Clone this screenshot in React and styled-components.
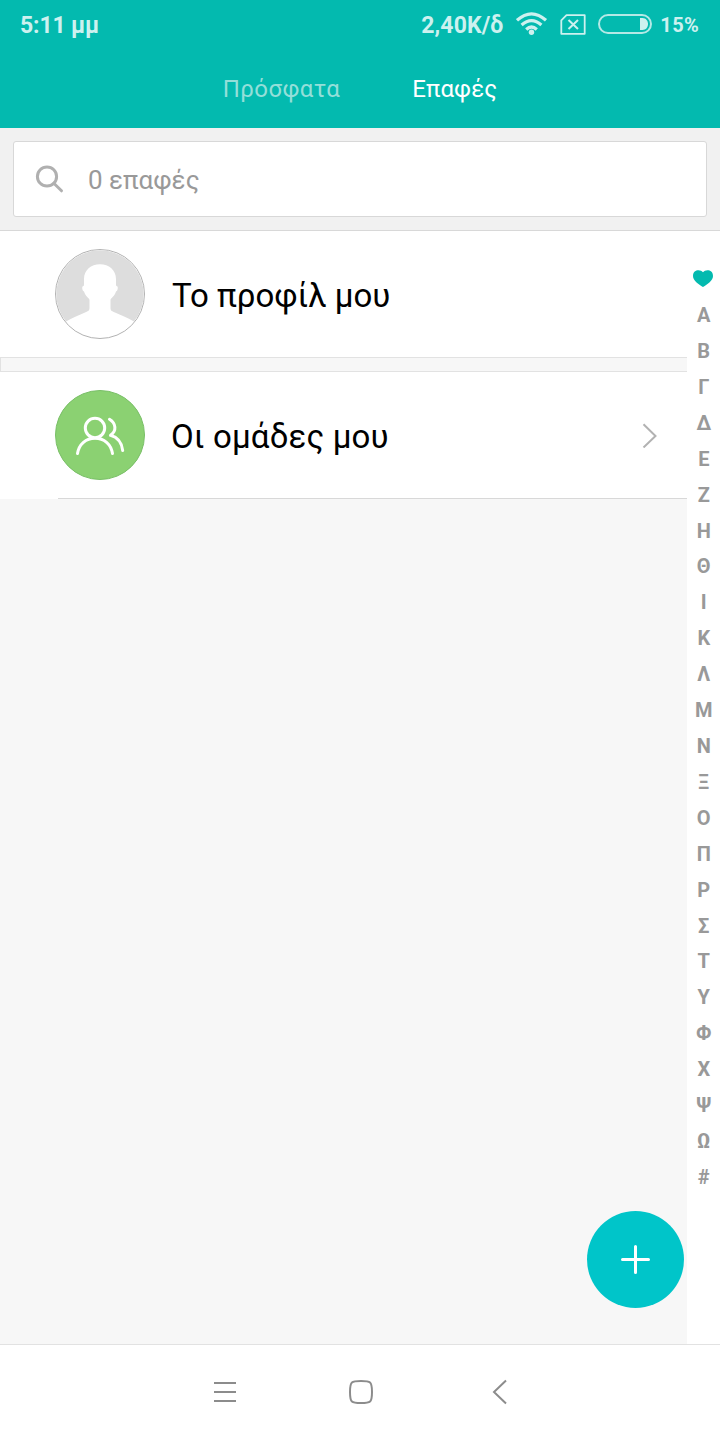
import React from "react";
import styled, { createGlobalStyle } from "styled-components";

const GlobalStyle = createGlobalStyle`
  * {
    box-sizing: border-box;
  }
  body {
    margin: 0;
    background: #f7f7f7;
    font-family: Roboto, "Noto Sans", sans-serif;
  }
  svg {
    display: block;
    flex: none;
  }
  button {
    padding: 0;
    border: 0;
    background: none;
    font: inherit;
    color: inherit;
  }
`;

const Screen = styled.div`
  position: relative;
  display: flex;
  flex-direction: column;
  width: 720px;
  height: 1440px;
  overflow: hidden;
`;

const Header = styled.header`
  height: 128px;
  background: #03baaf;
`;

const StatusBar = styled.div`
  display: flex;
  align-items: flex-start;
  height: 50px;
  padding: 0 21px 0 20px;
  color: #cdf1ef;
  font-weight: 700;
`;

const StatusText = styled.span`
  margin-left: ${({ $gap }) => $gap || 0}px;
  padding-top: ${({ $top }) => $top || 0}px;
  font-size: ${({ $size }) => $size || 23}px;
  line-height: 50px;
  white-space: nowrap;
  letter-spacing: ${({ $spacing }) => $spacing || 0}px;
`;

const StatusIcons = styled.div`
  display: flex;
  align-items: flex-start;
  margin-left: auto;
`;

const Glyph = styled.svg`
  margin-left: ${({ $gap }) => $gap}px;
  margin-top: ${({ $top }) => $top}px;
`;

const Tabs = styled.nav`
  display: flex;
  justify-content: center;
  gap: 72px;
  height: 78px;
`;

const Tab = styled.button`
  height: 79px;
  line-height: 79px;
  font-size: 24px;
  letter-spacing: ${({ $spacing }) => $spacing || 0}px;
  color: ${({ $active }) => ($active ? "#ffffff" : "#93dfd9")};
`;

const SearchArea = styled.div`
  height: 103px;
  padding: 13px;
  background: #f1f1f1;
  border-bottom: 1px solid #d8d8d8;
`;

const SearchBox = styled.div`
  display: flex;
  align-items: center;
  height: 76px;
  padding-left: 21px;
  background: #ffffff;
  border: 1px solid #d8d8d8;
  border-radius: 3px;
`;

const SearchText = styled.span`
  margin: 2px 0 0 23px;
  font-size: 26px;
  color: #999999;
`;

const Body = styled.main`
  display: flex;
  flex: 1;
  min-height: 0;
`;

const List = styled.div`
  flex: 1;
  background: #f7f7f7;
`;

const Row = styled.div`
  display: flex;
  align-items: center;
  height: 126px;
  padding: 0 29px 0 55px;
  background: #ffffff;
`;

const Name = styled.span`
  flex: 1;
  margin: 2px 0 0 ${({ $gap }) => $gap}px;
  font-size: 33px;
  letter-spacing: ${({ $spacing }) => $spacing || 0}px;
  color: #000000;
`;

const Divider = styled.div`
  height: 15px;
  border: 1px solid #e2e2e2;
  border-right: 0;
  background: #f7f7f7;
`;

const Underline = styled.div`
  height: 1px;
  border-left: 58px solid #ffffff;
  background: #d8d8d8;
`;

const Index = styled.div`
  display: flex;
  flex-direction: column;
  align-items: center;
  width: 33px;
  padding-top: 39px;
  background: #ffffff;
`;

const Favorites = styled.div`
  height: 27.1px;
  padding-right: 1px;
`;

const Letter = styled.span`
  height: 35.91px;
  padding-left: 0.5px;
  line-height: 36px;
  font-size: 20px;
  font-weight: 700;
  color: #999999;
`;

const NavBar = styled.footer`
  display: flex;
  justify-content: center;
  align-items: center;
  gap: 112px;
  height: 96px;
  padding: 0 0 2px 3px;
  border-top: 1px solid #e2e2e2;
  background: #ffffff;
`;

const AddButton = styled.button`
  position: absolute;
  right: 36px;
  bottom: 132px;
  display: flex;
  align-items: center;
  justify-content: center;
  width: 97px;
  height: 97px;
  border-radius: 50%;
  background: #00c5c9;
`;

const WifiIcon = () => (
  <Glyph $gap={13} $top={11} width="32" height="26" viewBox="0 0 32 26" fill="none" stroke="#cdf1ef" strokeWidth="3.2">
    <path d="M1 9.3Q15.5 -3.7 30 9.3" />
    <path d="M5.6 14Q15.5 5.2 25.4 14" />
    <path d="M10.2 18.5Q15.5 13.5 20.8 18.5" />
    <circle cx="15.5" cy="21.2" r="2.7" fill="#cdf1ef" stroke="none" />
  </Glyph>
);

const SimIcon = () => (
  <Glyph $gap={12} $top={14} width="26" height="22" viewBox="0 0 26 22" fill="none" stroke="#cdf1ef">
    <path d="M6.5 1.2H24.7V19.8H1.3V6.3Z" strokeWidth="1.8" strokeLinejoin="round" />
    <path d="M8.5 6L18 15M18 6L8.5 15" strokeWidth="2" />
  </Glyph>
);

const BatteryIcon = () => (
  <Glyph $gap={12} $top={14} width="54" height="20" viewBox="0 0 54 20">
    <rect x="1" y="1" width="52" height="18" rx="9" fill="none" stroke="#b4e9e6" strokeWidth="2" />
    <path d="M42 4H44.5C48 4 50 7 50 10S48 16 44.5 16H42Z" fill="#cdf1ef" />
  </Glyph>
);

const SearchIcon = () => (
  <svg width="30" height="30" viewBox="0 0 30 30" fill="none" stroke="#b0b0b0" strokeWidth="3">
    <circle cx="12" cy="12.5" r="9.6" />
    <path d="M18.8 19.3L26.5 26.8" strokeLinecap="round" />
  </svg>
);

const ProfileAvatar = () => (
  <svg width="90" height="90" viewBox="0 0 90 90">
    <circle cx="45" cy="45" r="44.5" fill="#ffffff" stroke="#a9a9a9" strokeWidth="0.9" />
    <path
      d="M11 72.5A43.7 43.7 0 1 1 79 72.5C72 68.500 66 66 60 63.500C56.500 62 55.500 61.500 55.500 59V51C55.500 49 59.500 48 61 42.500C63 42 63.500 37 61.500 37C60.800 37 61 34 61 30C61 21 54 15.200 45 15.200S29 21 29 30C29 34 29.200 37 28.500 37C26.500 37 27 42 29 42.500C30.500 48 34.500 49 34.500 51V59C34.500 61.500 33.500 62 30 63.500C24 66 18 68.500 11 72.500Z"
      fill="#dddddd"
    />
  </svg>
);

const GroupAvatar = () => (
  <svg width="90" height="90" viewBox="0 0 90 90" fill="none">
    <circle cx="45" cy="45" r="44.5" fill="#8bd172" stroke="#79bf67" />
    <g stroke="#ffffff" strokeWidth="3" strokeLinecap="round">
      <circle cx="40" cy="38" r="9.7" />
      <path d="M22.5 63.5C24 54 31 48.2 40 48.2S56 54 57.5 63.5" />
      <path d="M54.5 29.3C61 33.3 62 41 55.5 45.3C62.5 47.2 66.8 53 67.7 60.5" strokeLinejoin="round" />
    </g>
  </svg>
);

const ChevronIcon = () => (
  <svg width="16" height="26" viewBox="0 0 16 26" fill="none" stroke="#b2b2b2" strokeWidth="2">
    <path d="M1.5 2.3L13.5 14L1.5 25.5" />
  </svg>
);

const HeartIcon = () => (
  <svg width="20" height="17" viewBox="0 0 20 17">
    <path
      d="M10 2.2C7.7 -0.8 0 -0.9 0 6C0 10.5 5.5 14.5 10 17C14.5 14.5 20 10.5 20 6C20 -0.9 12.3 -0.8 10 2.2Z"
      fill="#03baaf"
    />
  </svg>
);

const MenuIcon = () => (
  <svg width="24" height="26" viewBox="0 0 24 26" stroke="#8c8c8c" strokeWidth="2">
    <path d="M1 4H23M1 13H23M1 22H23" />
  </svg>
);

const HomeIcon = () => (
  <svg width="26" height="26" viewBox="0 0 26 26" fill="none" stroke="#8c8c8c" strokeWidth="2">
    <path d="M12 2C21.500 2 23 2.300 23 13S21.500 24 12 24S1 23.700 1 13S2.500 2 12 2Z" />
  </svg>
);

const BackIcon = () => (
  <svg width="24" height="26" viewBox="0 0 24 26" fill="none" stroke="#8c8c8c" strokeWidth="2">
    <path d="M19 1.5L7 13L19 24.5" />
  </svg>
);

const PlusIcon = () => (
  <svg width="29" height="29" viewBox="0 0 29 29" stroke="#ffffff" strokeWidth="3" strokeLinecap="round">
    <path d="M14.5 1.5V27.5M1.5 14.5H27.5" />
  </svg>
);

const letters = [..."ΑΒΓΔΕΖΗΘΙΚΛΜΝΞΟΠΡΣΤΥΦΧΨΩ#"];

const App = () => {
  return (
    <>
      <GlobalStyle />
      <Screen>
        <Header>
          <StatusBar>
            <StatusText $top={1} $spacing={-0.15}>5:11 μμ</StatusText>
            <StatusIcons>
              <StatusText $top={1} $spacing={0.1}>2,40K/δ</StatusText>
              <WifiIcon />
              <SimIcon />
              <BatteryIcon />
              <StatusText $size={20} $gap={8} $spacing={0.3}>
                15%
              </StatusText>
            </StatusIcons>
          </StatusBar>
          <Tabs>
            <Tab $spacing={0.4}>Πρόσφατα</Tab>
            <Tab $active $spacing={0.1}>Επαφές</Tab>
          </Tabs>
        </Header>
        <SearchArea>
          <SearchBox>
            <SearchIcon />
            <SearchText>0 επαφές</SearchText>
          </SearchBox>
        </SearchArea>
        <Body>
          <List>
            <Row>
              <ProfileAvatar />
              <Name $gap={27}>Το προφίλ μου</Name>
            </Row>
            <Divider />
            <Row>
              <GroupAvatar />
              <Name $gap={26} $spacing={0.15}>
                Οι ομάδες μου
              </Name>
              <ChevronIcon />
            </Row>
            <Underline />
          </List>
          <Index>
            <Favorites>
              <HeartIcon />
            </Favorites>
            {letters.map((letter) => (
              <Letter key={letter}>{letter}</Letter>
            ))}
          </Index>
        </Body>
        <NavBar>
          <MenuIcon />
          <HomeIcon />
          <BackIcon />
        </NavBar>
        <AddButton aria-label="Προσθήκη">
          <PlusIcon />
        </AddButton>
      </Screen>
    </>
  );
};

export default App;
